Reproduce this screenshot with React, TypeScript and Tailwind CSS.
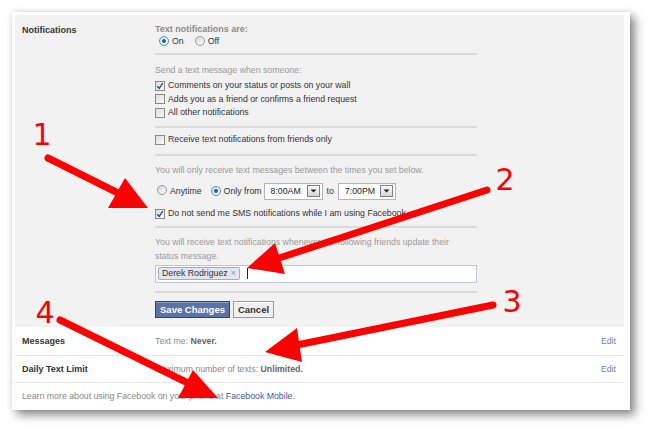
import React from "react";

const Cb = ({ checked = false }: { checked?: boolean }) => (
  <span className="relative inline-flex h-[10px] w-[10px] shrink-0 items-center justify-center border border-[#8a8a8a] bg-gradient-to-br from-[#dcdcdc] to-[#fafafa]">
    {checked && (
      <svg width="8" height="8" viewBox="0 0 8 8" className="absolute">
        <path d="M1.2 4.2 L3.2 6.3 L6.8 1.2" fill="none" stroke="#2a4d8f" strokeWidth="1.4" />
      </svg>
    )}
  </span>
);

const Radio = ({ on = false }: { on?: boolean }) => (
  <span
    className={
      on
        ? "inline-flex h-[10px] w-[10px] shrink-0 items-center justify-center rounded-full border border-[#5b87b5] bg-gradient-to-br from-[#cfe0f0] to-white"
        : "inline-flex h-[10px] w-[10px] shrink-0 items-center justify-center rounded-full border border-[#9a9a9a] bg-gradient-to-br from-[#d6d6d6] to-white"
    }
  >
    {on && <span className="h-[4px] w-[4px] rounded-full bg-[#1b5fa5]" />}
  </span>
);

const Select = ({ value, w }: { value: string; w: string }) => (
  <div className={`flex h-[17px] ${w} shrink-0 items-center border border-[#b5b5b5] bg-white pl-[6px] pr-[2px]`}>
    <span className="flex-1 text-[#222]">{value}</span>
    <span className="flex h-[12px] w-[13px] items-center justify-center border border-[#7f7f7f] bg-gradient-to-b from-white to-[#d4d4d4]">
      <svg width="7" height="4" viewBox="0 0 7 4">
        <path d="M0.5 0.5 L6.5 0.5 L3.5 3.5 Z" fill="#222" />
      </svg>
    </span>
  </div>
);

const Sep = () => <div className="h-[2px] w-full bg-[#dadada]" />;

export default function App() {
  return (
    <div
      className="relative h-[431px] w-[650px] overflow-hidden bg-white text-[8.75px] leading-[11px] text-[#333]"
      style={{ fontFamily: '"Liberation Sans", Arial, sans-serif' }}
    >
      <div className="ml-[12px] mt-[12px] flex h-[398px] w-[618px] flex-col bg-white pl-[3px] pr-[6px] pt-[3px] shadow-[0_0_5px_rgba(0,0,0,0.12),5px_5px_9px_rgba(0,0,0,0.45)]">
        {/* Gray edit section */}
        <div className="flex h-[312px] bg-[#f2f2f2]">
          <div className="w-[140px] shrink-0 pl-[7px] pt-[10px] text-[9px] font-bold text-[#333]">Notifications</div>
          <div className="flex w-[322px] flex-col pt-[9px]">
            <div className="flex h-[11px] items-center text-[9px] font-bold text-[#8a8a8a]">Text notifications are:</div>
            <div className="flex h-[12px] items-center gap-[3px] pl-[4px] text-[#333]">
              <Radio on />
              <span className="mr-[8px]">On</span>
              <Radio />
              <span>Off</span>
            </div>
            <div className="mt-[6px]">
              <Sep />
            </div>
            <div className="mt-[9px] flex h-[12px] items-center text-[#999]">Send a text message when someone:</div>
            <div className="mt-[3px] flex h-[13.5px] items-center gap-[3px]">
              <Cb checked />
              <span>Comments on your status or posts on your wall</span>
            </div>
            <div className="flex h-[13.5px] items-center gap-[3px]">
              <Cb />
              <span>Adds you as a friend or confirms a friend request</span>
            </div>
            <div className="flex h-[13.5px] items-center gap-[3px]">
              <Cb />
              <span>All other notifications</span>
            </div>
            <div className="mt-[6px]">
              <Sep />
            </div>
            <div className="mt-[5px] flex h-[14px] items-center gap-[3px]">
              <Cb />
              <span>Receive text notifications from friends only</span>
            </div>
            <div className="mt-[7px]">
              <Sep />
            </div>
            <div className="mt-[9px] flex h-[12px] items-center text-[#999]">
              You will only receive text messages between the times you set below.
            </div>
            <div className="mt-[6px] flex h-[17px] items-center">
              <span className="ml-[2px]">
                <Radio />
              </span>
              <span className="ml-[3px] mr-[9px]">Anytime</span>
              <Radio on />
              <span className="ml-[3px] mr-[2px]">Only from</span>
              <Select value="8:00AM" w="w-[59px]" />
              <span className="ml-[4px] mr-[4px]">to</span>
              <Select value="7:00PM" w="w-[58px]" />
            </div>
            <div className="mt-[7px] flex h-[14px] items-center gap-[3px]">
              <Cb checked />
              <span>Do not send me SMS notifications while I am using Facebook</span>
            </div>
            <div className="mt-[5px]">
              <Sep />
            </div>
            <div className="mt-[7px] text-[#999] leading-[14px]">
              You will receive text notifications whenever the following friends update their
              <br />
              status message.
            </div>
            <div className="mt-[2px] flex h-[18px] items-center border border-[#bdc7d8] bg-white pl-[2px]">
              <span className="flex h-[13px] items-center rounded-[2px] border border-[#9daccc] bg-[#e2e6f0] pl-[3px] pr-[3px] text-[#333]">
                Derek Rodriguez
                <span className="ml-[3px] text-[#8a95b0]">×</span>
              </span>
              <span className="ml-[7px] h-[11px] w-[1px] bg-[#222]" />
            </div>
            <div className="mt-[8px]">
              <Sep />
            </div>
            <div className="mt-[8px] flex gap-[3px]">
              <button className="flex h-[17px] w-[75px] items-center justify-center border border-[#29447e] bg-[#5b74a8] text-[9.5px] font-bold text-white shadow-[inset_0_1px_0_#8a9cc2]">
                Save Changes
              </button>
              <button className="flex h-[17px] w-[41px] items-center justify-center border border-[#999] bg-[#f0f0f0] text-[9.5px] font-bold text-[#333] shadow-[inset_0_1px_0_#fff]">
                Cancel
              </button>
            </div>
          </div>
        </div>

        {/* White rows */}
        <div className="flex h-[29px] items-center border-b border-[#e6e6e6] pr-[8px]">
          <div className="w-[140px] shrink-0 pl-[7px] text-[9px] font-bold">Messages</div>
          <div className="flex-1 text-[#888]">
            Text me: <span className="font-bold text-[#666]">Never.</span>
          </div>
          <span className="text-[#6d84b4]">Edit</span>
        </div>
        <div className="flex h-[27px] items-center border-b border-[#e6e6e6] pr-[8px]">
          <div className="w-[140px] shrink-0 pl-[7px] text-[9px] font-bold">Daily Text Limit</div>
          <div className="flex-1 text-[#888]">
            Maximum number of texts: <span className="font-bold text-[#666]">Unlimited.</span>
          </div>
          <span className="text-[#6d84b4]">Edit</span>
        </div>
        <div className="flex h-[27px] items-center pl-[7px] text-[#888]">
          <span>
            Learn more about using Facebook on your phone at{" "}
            <span className="text-[#3b5998]">Facebook Mobile</span>.
          </span>
        </div>
      </div>

      {/* Annotation overlay */}
      <svg
        className="pointer-events-none absolute left-0 top-0"
        width="650"
        height="431"
        viewBox="0 0 650 431"
      >
        <g stroke="#ff0000" strokeWidth="7" strokeLinecap="round" fill="none">
          <line x1="48" y1="158" x2="122" y2="195" />
          <line x1="487" y1="190" x2="276" y2="259" />
          <line x1="493" y1="305" x2="292" y2="346" />
          <line x1="60" y1="320" x2="190" y2="384" />
        </g>
        <g fill="#ff0000">
          <polygon points="125,178 108,208 148,208" />
          <polygon points="275,243 285,274 247,268" />
          <polygon points="297,328 302,362 265,352" />
          <polygon points="193,370 178,398 218,398" />
        </g>
        <g
          fill="#ff0000"
          fontSize="30"
          textAnchor="middle"
          style={{ fontFamily: '"DejaVu Sans", sans-serif' }}
        >
          <text x="42" y="145">1</text>
          <text x="505" y="190">2</text>
          <text x="512" y="312">3</text>
          <text x="45" y="323">4</text>
        </g>
      </svg>
    </div>
  );
}
